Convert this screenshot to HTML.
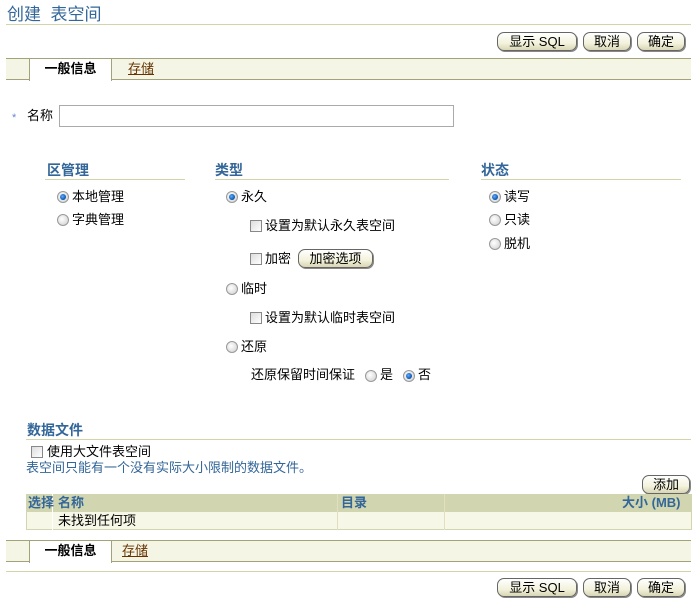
<!DOCTYPE html>
<html><head><meta charset="utf-8">
<style>
*{margin:0;padding:0;box-sizing:border-box}
body{width:698px;height:604px;background:#fff;position:relative;overflow:hidden;font-family:"Liberation Sans","Noto Sans CJK SC",sans-serif;font-size:13px;color:#000}
.a{position:absolute;white-space:nowrap;line-height:16px}
.h{color:#336699;font-weight:bold;font-size:14px}
.ln{position:absolute;height:1px;background:#d2d5a8}
.btn{position:absolute;height:19px;border:1px solid #666;border-radius:7px;background:linear-gradient(#fff,#f3f2dc 60%,#d9d6b4);box-shadow:1px 1px 0 #888;font-size:13px;text-align:center;line-height:17px}
.rad{position:absolute;width:12px;height:12px;border-radius:50%;border:1px solid #999;background:radial-gradient(circle at 40% 40%,#fff,#ccc)}
.rad.on::after{content:"";position:absolute;left:2px;top:2px;width:6px;height:6px;border-radius:50%;background:radial-gradient(circle at 40% 40%,#6af,#05a 70%)}
.cb{position:absolute;width:12px;height:12px;border:1px solid #888;background:linear-gradient(135deg,#ddd,#fff)}
.tabbar{position:absolute;left:6px;width:685px;height:22px;background:#f5f5e6;border-top:1px solid #a3a37a;border-bottom:1px solid #a3a37a}
.tab{position:absolute;left:23px;top:-1px;width:83px;height:23px;background:#fff;border:1px solid #a3a37a;border-bottom:none;font-weight:bold;font-size:13px;text-align:center;line-height:20px}
.lk{position:absolute;left:122px;top:1px;color:#663300;text-decoration:underline;font-size:13px;line-height:18px}
</style></head><body>
<div class="a" style="left:7px;top:5px;font-size:17px;line-height:20px;color:#336699">创建&nbsp;&nbsp;表空间</div>
<div class="ln" style="left:6px;top:24px;width:685px"></div>
<div class="btn" style="left:497px;top:32px;width:80px">显示 SQL</div>
<div class="btn" style="left:583px;top:32px;width:48px">取消</div>
<div class="btn" style="left:637px;top:32px;width:48px">确定</div>
<div class="tabbar" style="top:58px"><div class="tab">一般信息</div><div class="lk">存储</div></div>

<div class="a" style="left:12px;top:110px;color:#6688cc;font-size:11px">*</div>
<div class="a" style="left:27px;top:108px">名称</div>
<div class="a" style="left:59px;top:105px;width:395px;height:22px;border:1px solid #aaa"></div>

<div class="a h" style="left:47px;top:162px">区管理</div><div class="ln" style="left:45px;top:179px;width:140px"></div>
<div class="a h" style="left:215px;top:162px">类型</div><div class="ln" style="left:215px;top:179px;width:234px"></div>
<div class="a h" style="left:481px;top:162px">状态</div><div class="ln" style="left:481px;top:179px;width:200px"></div>

<div class="rad on" style="left:57px;top:191px"></div><div class="a" style="left:72px;top:189px">本地管理</div>
<div class="rad" style="left:57px;top:214px"></div><div class="a" style="left:72px;top:212px">字典管理</div>

<div class="rad on" style="left:226px;top:191px"></div><div class="a" style="left:241px;top:189px">永久</div>
<div class="cb" style="left:250px;top:220px"></div><div class="a" style="left:265px;top:218px">设置为默认永久表空间</div>
<div class="cb" style="left:250px;top:253px"></div><div class="a" style="left:265px;top:251px">加密</div>
<div class="btn" style="left:298px;top:249px;width:75px">加密选项</div>
<div class="rad" style="left:226px;top:283px"></div><div class="a" style="left:241px;top:281px">临时</div>
<div class="cb" style="left:250px;top:312px"></div><div class="a" style="left:265px;top:310px">设置为默认临时表空间</div>
<div class="rad" style="left:226px;top:341px"></div><div class="a" style="left:241px;top:339px">还原</div>
<div class="a" style="left:251px;top:367px">还原保留时间保证</div>
<div class="rad" style="left:365px;top:370px"></div><div class="a" style="left:380px;top:367px">是</div>
<div class="rad on" style="left:403px;top:370px"></div><div class="a" style="left:418px;top:367px">否</div>

<div class="rad on" style="left:489px;top:191px"></div><div class="a" style="left:504px;top:189px">读写</div>
<div class="rad" style="left:489px;top:214px"></div><div class="a" style="left:504px;top:212px">只读</div>
<div class="rad" style="left:489px;top:238px"></div><div class="a" style="left:504px;top:236px">脱机</div>

<div class="a h" style="left:27px;top:422px">数据文件</div><div class="ln" style="left:26px;top:439px;width:665px"></div>
<div class="cb" style="left:31px;top:446px"></div><div class="a" style="left:47px;top:444px">使用大文件表空间</div>
<div class="a" style="left:26px;top:460px;color:#336699">表空间只能有一个没有实际大小限制的数据文件。</div>
<div class="btn" style="left:642px;top:475px;width:48px">添加</div>

<div class="a" style="left:26px;top:494px;width:666px;height:36px;background:#f7f7e7;border:1px solid #d2d5b0"></div>
<div class="a" style="left:26px;top:494px;width:666px;height:18px;background:#d2d6b0"></div>
<div class="a" style="left:52px;top:494px;width:1px;height:36px;background:#fff"></div>
<div class="a" style="left:337px;top:494px;width:1px;height:36px;background:#e0e0c0"></div>
<div class="a" style="left:444px;top:494px;width:1px;height:36px;background:#e0e0c0"></div>
<div class="a" style="left:28px;top:495px;color:#336699;font-weight:bold">选择</div>
<div class="a" style="left:58px;top:495px;color:#336699;font-weight:bold">名称</div>
<div class="a" style="left:341px;top:495px;color:#336699;font-weight:bold">目录</div>
<div class="a" style="left:622px;top:495px;color:#336699;font-weight:bold">大小 (MB)</div>
<div class="a" style="left:58px;top:513px">未找到任何项</div>

<div class="tabbar" style="top:540px"><div class="tab" style="top:-1px">一般信息</div><div class="lk" style="left:116px">存储</div></div>
<div class="ln" style="left:6px;top:571px;width:685px"></div>
<div class="btn" style="left:497px;top:578px;width:80px">显示 SQL</div>
<div class="btn" style="left:583px;top:578px;width:48px">取消</div>
<div class="btn" style="left:637px;top:578px;width:48px">确定</div>
</body></html>
